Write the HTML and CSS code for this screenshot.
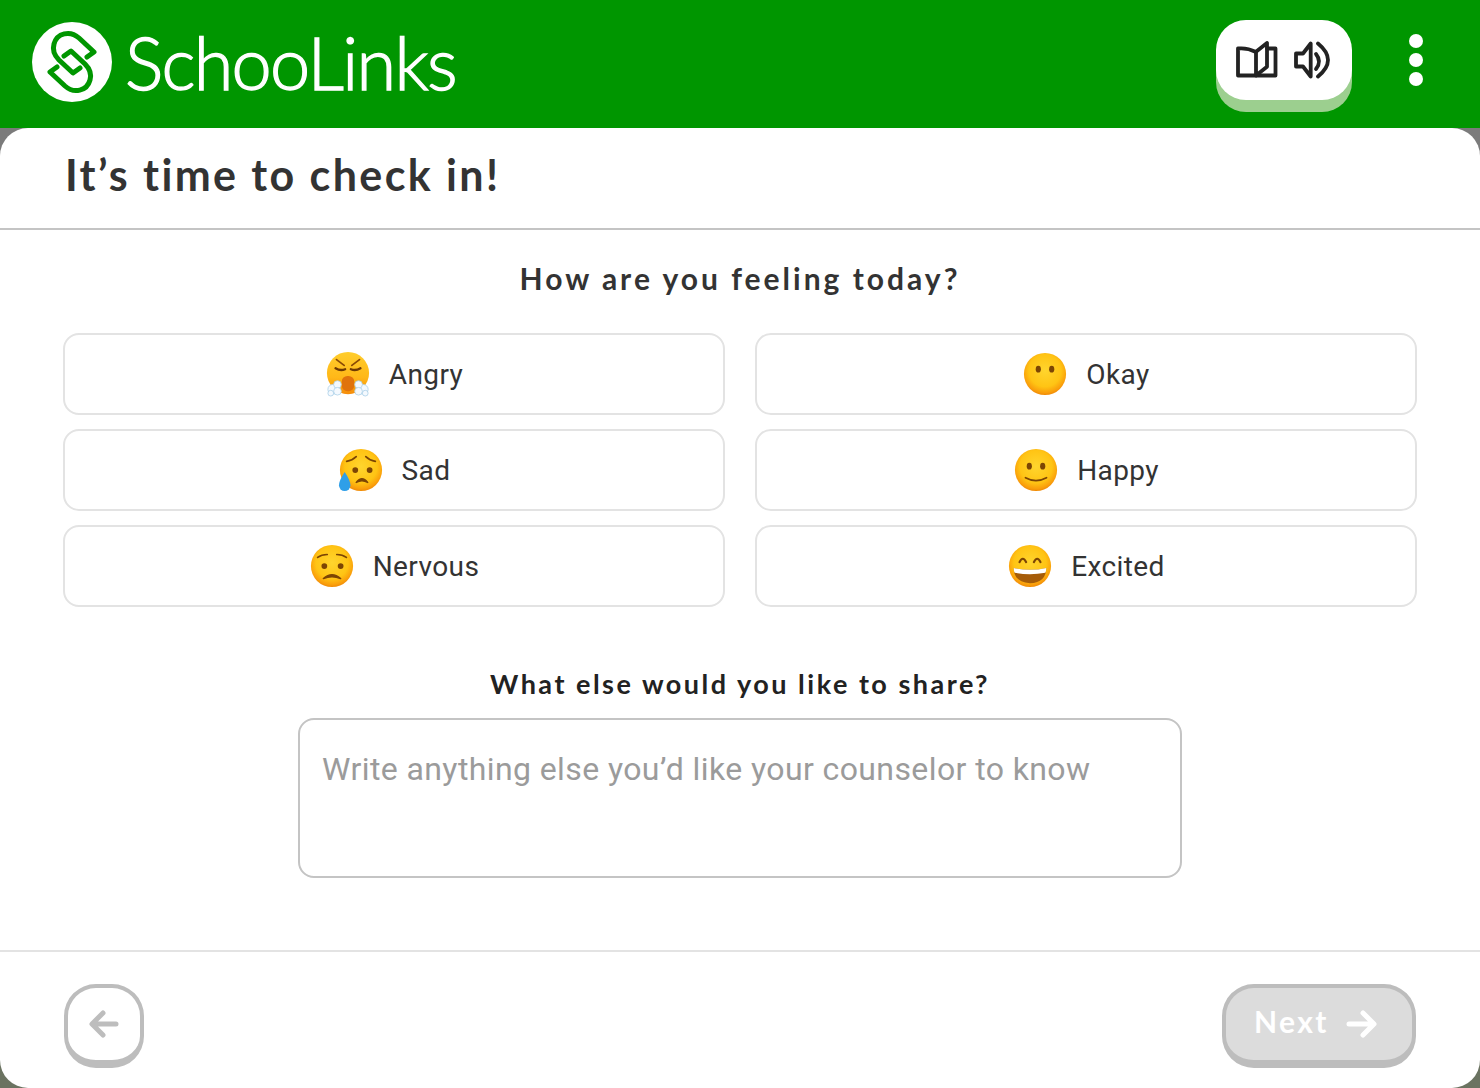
FILE: index.html
```html
<!DOCTYPE html>
<html lang="en">
<head>
<meta charset="utf-8">
<title>SchooLinks check-in</title>
<link rel="stylesheet" href="styles.css">
</head>
<body>
<svg class="defs" width="0" height="0" aria-hidden="true">
  <defs>
    <radialGradient id="face" cx="50%" cy="42%" r="58%">
      <stop offset="0" stop-color="#ffd52e"/>
      <stop offset=".66" stop-color="#ffc414"/>
      <stop offset=".9" stop-color="#fa9f0b"/>
      <stop offset="1" stop-color="#ef8a07"/>
    </radialGradient>
    <linearGradient id="hot" x1="0" y1="0" x2="0" y2="1">
      <stop offset="0" stop-color="#ffcd2c"/>
      <stop offset=".6" stop-color="#ffb818"/>
      <stop offset="1" stop-color="#f58c0a"/>
    </linearGradient>
    <symbol id="e-angry" viewBox="0 0 48 48">
      <circle cx="24" cy="23" r="22" fill="url(#hot)"/>
      <path d="M12 9l8 6M36 9l-8 6" stroke="#8a4a05" stroke-width="1.800" stroke-linecap="round" fill="none"/>
      <path d="M11 18q5 3 10 1M37 18q-5 3-10 1" stroke="#6e3a04" stroke-width="2.400" stroke-linecap="round" fill="none"/>
      <rect x="17.500" y="26" width="13" height="16" rx="6" fill="#e0730c"/>
      <g fill="#f4f9fe" stroke="#a9cfe8" stroke-width=".8">
        <circle cx="8" cy="40" r="5"/><circle cx="13" cy="35" r="4"/><circle cx="13" cy="42" r="4"/><circle cx="6" cy="44" r="3"/>
        <circle cx="40" cy="40" r="5"/><circle cx="35" cy="35" r="4"/><circle cx="35" cy="42" r="4"/><circle cx="42" cy="44" r="3"/>
      </g>
    </symbol>
    <symbol id="e-sad" viewBox="0 0 48 48">
      <circle cx="24" cy="24" r="22" fill="url(#face)"/>
      <path d="M9 15q6-1 10-5M39 15q-6-1-10-5" stroke="#7c4504" stroke-width="1.800" stroke-linecap="round" fill="none"/>
      <circle cx="18" cy="24" r="3" fill="#7c4504"/><circle cx="33" cy="24" r="3" fill="#7c4504"/>
      <path d="M19 37q6-8 12 0q-6-3.500-12 0z" fill="#7c4504" stroke="#7c4504" stroke-width="1.500" stroke-linejoin="round"/>
      <path d="M7 26q-6 9-6 14a6 6 0 0 0 12 0q0-5-6-14z" fill="#2f9fe8"/>
    </symbol>
    <symbol id="e-nervous" viewBox="0 0 48 48">
      <circle cx="24" cy="24" r="22" fill="url(#face)"/>
      <path d="M9 15q4-3 10-3M39 15q-4-3-10-3" stroke="#7c4504" stroke-width="1.800" stroke-linecap="round" fill="none"/>
      <circle cx="16" cy="24" r="3" fill="#7c4504"/><circle cx="33" cy="24" r="3" fill="#7c4504"/>
      <path d="M15 37q9-8 18 0q-9-3.500-18 0z" fill="#7c4504" stroke="#7c4504" stroke-width="1.500" stroke-linejoin="round"/>
    </symbol>
    <symbol id="e-okay" viewBox="0 0 48 48">
      <circle cx="24" cy="24" r="22" fill="url(#face)"/>
      <ellipse cx="17" cy="19" rx="2.700" ry="3.500" fill="#7c4504"/><ellipse cx="31" cy="19" rx="2.700" ry="3.500" fill="#7c4504"/>
    </symbol>
    <symbol id="e-happy" viewBox="0 0 48 48">
      <circle cx="24" cy="24" r="22" fill="url(#face)"/>
      <ellipse cx="17" cy="20" rx="2.700" ry="3.500" fill="#7c4504"/><ellipse cx="31" cy="20" rx="2.700" ry="3.500" fill="#7c4504"/>
      <path d="M13 32q11 6 22 0" stroke="#7c4504" stroke-width="1.800" stroke-linecap="round" fill="none"/>
    </symbol>
    <symbol id="e-excited" viewBox="0 0 48 48">
      <circle cx="24" cy="24" r="22" fill="url(#face)"/>
      <path d="M13 20q3.500-7 7 0M28 20q3.500-7 7 0" stroke="#7c4504" stroke-width="2.200" stroke-linecap="round" fill="none"/>
      <path d="M7 26q17 4 34 0q0 15-17 16q-17-1-17-16z" fill="#a65c08"/>
      <path d="M7 26q17 4 34 0q0 3-1 5q-16 3-32 0q-1-2-1-5z" fill="#fff"/>
    </symbol>
  </defs>
</svg>

<header class="topbar">
  <div class="brand">
    <svg class="brand-mark" viewBox="0 0 80 80" aria-hidden="true">
      <circle cx="40" cy="40" r="40" fill="#fff"/>
      <g fill="none" stroke="#009600" stroke-width="5" stroke-linecap="round" stroke-linejoin="round">
        <path d="M55 35L62 30L47 16C38 8 25 11 22 22C20 29 23 34 27 38L41 51L48 46"/>
        <path d="M25 45L18 50L33 64C42 72 55 69 58 58C60 51 57 46 53 42L39 29L32 34"/>
      </g>
    </svg>
    <span class="brand-name">SchooLinks</span>
  </div>
  <div class="tools">
    <div class="tool-pill">
      <svg class="tool-icon book" viewBox="0 0 42 38" aria-hidden="true">
        <g fill="none" stroke="#222" stroke-width="3.800" stroke-linecap="round" stroke-linejoin="round">
          <path d="M20 11Q11 6.500 2 7.500V34.500H20H39.500V7.500H31"/>
          <path d="M20 34.500V10.700L31 2V25.700L20 34.500"/>
        </g>
      </svg>
      <svg class="tool-icon speaker" viewBox="0 0 38 38" aria-hidden="true">
        <g fill="none" stroke="#222" stroke-width="3.800" stroke-linecap="round" stroke-linejoin="round">
          <path d="M2 12.500H9L16.700 2.500V35.500L9 25.500H2Z"/>
          <path d="M22 13Q28 20.500 22 28"/>
          <path d="M24 2.500Q44 19 24 35.500"/>
        </g>
      </svg>
    </div>
    <div class="kebab"><i></i><i></i><i></i></div>
  </div>
</header>

<main class="card">
  <h1 class="title">It’s time to check in!</h1>
  <section class="body">
    <h2 class="question">How are you feeling today?</h2>
    <div class="moods">
      <button class="mood"><svg class="emoji"><use href="#e-angry"/></svg>Angry</button>
      <button class="mood"><svg class="emoji"><use href="#e-okay"/></svg>Okay</button>
      <button class="mood"><svg class="emoji"><use href="#e-sad"/></svg>Sad</button>
      <button class="mood"><svg class="emoji"><use href="#e-happy"/></svg>Happy</button>
      <button class="mood"><svg class="emoji"><use href="#e-nervous"/></svg>Nervous</button>
      <button class="mood"><svg class="emoji"><use href="#e-excited"/></svg>Excited</button>
    </div>
    <label class="share-label" for="share">What else would you like to share?</label>
    <textarea class="share" id="share" placeholder="Write anything else you’d like your counselor to know"></textarea>
  </section>
  <footer class="actions">
    <button class="back" aria-label="Back">
      <svg viewBox="0 0 32 32" class="arrow" aria-hidden="true"><path d="M28 16H5M15 5L4 16L15 27" fill="none" stroke="#bdbdbd" stroke-width="5" stroke-linecap="round" stroke-linejoin="round"/></svg>
    </button>
    <button class="next"><span class="next-label">Next</span>
      <svg viewBox="0 0 32 32" class="arrow" aria-hidden="true"><path d="M3 16H27M17 5L28 16L17 27" fill="none" stroke="#fff" stroke-width="5" stroke-linecap="round" stroke-linejoin="round"/></svg>
    </button>
  </footer>
</main>
</body>
</html>
```

FILE: styles.css
```css
* { box-sizing: border-box; }
html, body { margin: 0; height: 100%; }
body {
  width: 1480px;
  height: 1088px;
  overflow: hidden;
  background: linear-gradient(#7b7b7b 0 200px, #6b7361 900px);
  font-family: Roboto, sans-serif;
  display: flex;
  flex-direction: column;
}
.defs { position: absolute; }
.topbar {
  height: 128px;
  flex: none;
  background: #009600;
  display: flex;
  align-items: flex-start;
  justify-content: space-between;
  padding: 22px 56px 0 32px;
}
.brand { display: flex; align-items: center; gap: 13px; height: 80px; }
.brand-mark { width: 80px; height: 80px; }
.brand-name {
  color: #fff;
  font-family: "Lato", sans-serif;
  font-weight: 300;
  font-size: 72px;
  letter-spacing: -1.700px;
  line-height: 80px;
  -webkit-text-stroke: 1.300px #fff;
}
.tools { display: flex; gap: 56px; margin-top: -2px; }
.tool-pill {
  width: 136px;
  height: 80px;
  background: #fff;
  border-radius: 30px;
  box-shadow: 0 12px 0 #9ccf8f;
  display: flex;
  align-items: center;
  justify-content: center;
  gap: 16px;
}
.tool-icon { height: 38px; }
.book { width: 42px; }
.speaker { width: 38px; }
.kebab {
  width: 16px;
  height: 80px;
  display: flex;
  flex-direction: column;
  align-items: center;
  justify-content: center;
  gap: 5px;
}
.kebab i { width: 14px; height: 14px; border-radius: 50%; background: #fff; }
.card {
  flex: 1;
  background: #fff;
  border-radius: 28px;
  display: flex;
  flex-direction: column;
}
.title {
  margin: 0;
  height: 102px;
  padding: 0 0 8px 65px;
  display: flex;
  align-items: center;
  border-bottom: 2px solid #c4c4c4;
  font-family: Lato, sans-serif;
  font-weight: 700;
  font-size: 43px;
  letter-spacing: 2.400px;
  color: #333;
}
.body {
  flex: 1;
  display: flex;
  flex-direction: column;
  align-items: center;
  padding-top: 30px;
}
.question {
  margin: 0 0 37px;
  height: 36px;
  line-height: 36px;
  font-family: Lato, sans-serif;
  font-weight: 700;
  font-size: 30px;
  letter-spacing: 3px;
  color: #333;
}
.moods {
  width: 1354px;
  display: grid;
  grid-template-columns: 1fr 1fr;
  gap: 14px 30px;
}
.mood {
  height: 82px;
  background: #fff;
  border: 2px solid #e3e3e3;
  border-radius: 16px;
  display: flex;
  align-items: center;
  justify-content: center;
  gap: 18px;
  font-family: Roboto, sans-serif;
  font-size: 28px;
  letter-spacing: .4px;
  color: #333;
  padding: 0;
}
.emoji { width: 46px; height: 46px; flex: none; }
.share-label {
  margin-top: 59px;
  height: 36px;
  line-height: 36px;
  font-family: Lato, sans-serif;
  font-weight: 700;
  font-size: 27px;
  letter-spacing: 2.500px;
  color: #222;
}
.share {
  display: block;
  margin-top: 16px;
  width: 884px;
  height: 160px;
  border: 2px solid #c4c4c4;
  border-radius: 16px;
  padding: 29px 22px;
  resize: none;
  outline: none;
  font-family: Roboto, sans-serif;
  font-size: 32px;
  letter-spacing: .4px;
  line-height: 40px;
  color: #333;
}
.share::placeholder { color: #9b9b9b; opacity: 1; }
.actions {
  height: 138px;
  flex: none;
  border-top: 2px solid #e3e3e3;
  display: flex;
  justify-content: space-between;
  align-items: flex-start;
  padding: 32px 64px 0;
}
.back, .next {
  height: 84px;
  border: 4px solid #bdbdbd;
  border-bottom-width: 8px;
  border-radius: 32px;
  display: flex;
  align-items: center;
  justify-content: center;
  padding: 0;
}
.back { width: 80px; background: #fff; }
.next {
  width: 194px;
  background: #dcdcdc;
  gap: 17px;
  padding-right: 6px;
  color: #fff;
  font-family: Lato, sans-serif;
  font-weight: 700;
  font-size: 30px;
  letter-spacing: 2.400px;
}
.next-label { margin-top: -6px; }
.arrow { width: 32px; height: 32px; }
```
